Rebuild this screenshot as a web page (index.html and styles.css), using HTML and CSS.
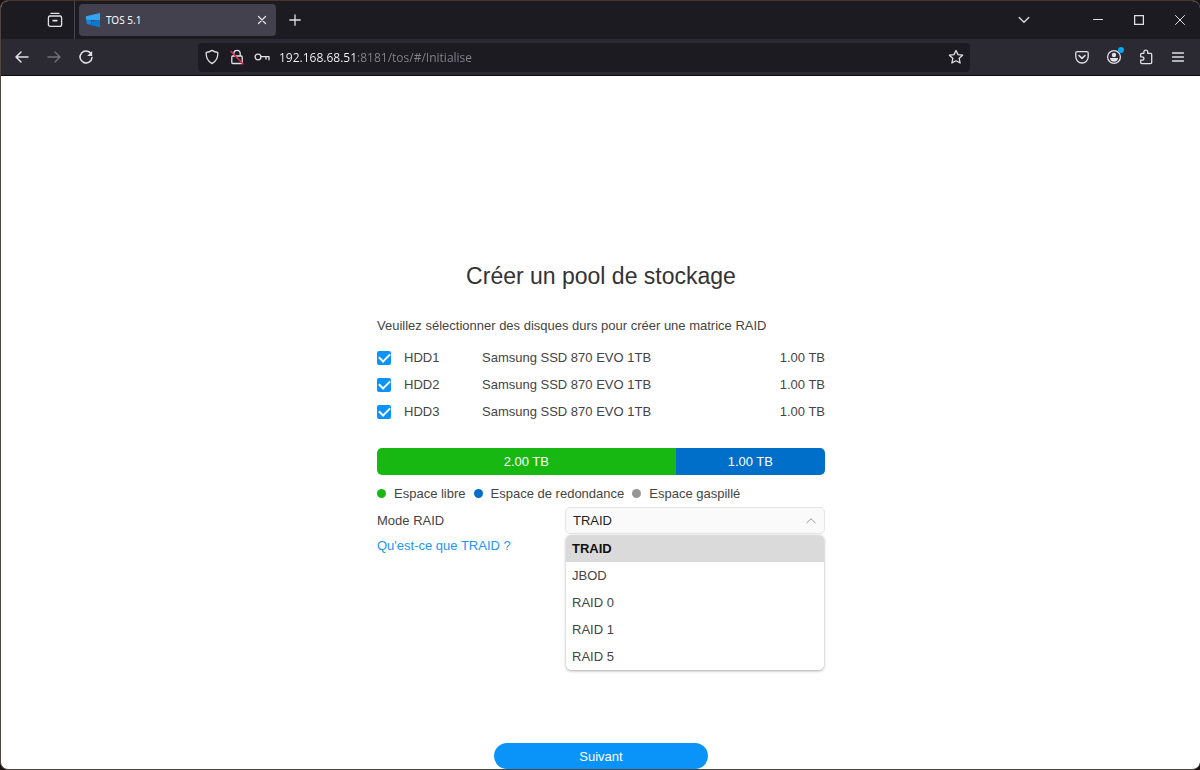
FILE: index.html
```html
<!DOCTYPE html>
<html lang="fr">
<head>
<meta charset="utf-8">
<title>TOS 5.1</title>
<link rel="stylesheet" href="styles.css">
</head>
<body>
<div class="window">
  <header class="tabbar">
    <button class="icon-btn recent" aria-label="Vue récente">
      <svg width="16" height="16" viewBox="0 0 16 16"><path d="M4 1.400h8M2.600 4h10.800q1.200.3 1.200 2v6.400q0 2-2 2H3.400q-2 0-2-2V6q0-1.700 1.200-2z"/><path d="M6.200 8.600h3.600" stroke-width="1.800"/></svg>
    </button>
    <div class="tab">
      <svg class="favicon" width="16" height="16" viewBox="0 0 16 16"><path d="M1 4.200 15 1v7.500L1 7.800z" fill="#33a6f2"/><path d="M1 7.800l5 .4v4.800L2 12z" fill="#1286dc"/><path d="M6.500 9.200l8.500-.7V15.200L6.500 13.500z" fill="#0b78d0"/></svg>
      <span class="tab-title">TOS 5.1</span>
      <button class="icon-btn tab-close" aria-label="Fermer l’onglet">
        <svg width="10" height="10" viewBox="0 0 10 10"><path d="M1.500 1.500l7 7m0-7l-7 7"/></svg>
      </button>
    </div>
    <button class="icon-btn new-tab" aria-label="Nouvel onglet">
      <svg width="12" height="12" viewBox="0 0 12 12"><path d="M6 .8v10.400M.8 6h10.400"/></svg>
    </button>
    <div class="window-controls">
      <button class="icon-btn tab-list" aria-label="Lister les onglets"><svg width="12" height="12" viewBox="0 0 12 12"><path d="M1.200 3.500 6 8.200l4.800-4.700"/></svg></button>
      <button class="icon-btn" aria-label="Réduire"><svg width="10" height="10" viewBox="0 0 10 10"><path d="M.5 4.500h9" stroke-width="1"/></svg></button>
      <button class="icon-btn" aria-label="Agrandir"><svg width="10" height="10" viewBox="0 0 10 10"><path d="M.6.6h8.800v8.800H.6z"/></svg></button>
      <button class="icon-btn" aria-label="Fermer"><svg width="10" height="10" viewBox="0 0 10 10"><path d="M.5.5l9 9m0-9l-9 9" stroke-width="1"/></svg></button>
    </div>
  </header>

  <nav class="toolbar">
    <div class="nav-buttons">
      <button class="icon-btn" aria-label="Page précédente"><svg width="16" height="16" viewBox="0 0 16 16"><path d="M14 8H2m5-5L2 8l5 5" stroke-width="1.500"/></svg></button>
      <button class="icon-btn" aria-label="Page suivante" disabled><svg width="16" height="16" viewBox="0 0 16 16"><path d="M2 8h12M9 3l5 5-5 5"/></svg></button>
      <button class="icon-btn" aria-label="Actualiser"><svg width="16" height="16" viewBox="0 0 16 16"><path d="M13 4.600A6 6 0 1 0 14 8.600" stroke-width="1.500"/><path d="M14.200 2v5H9.200z" fill="currentColor" stroke="none"/></svg></button>
    </div>
    <div class="urlbar">
      <button class="icon-btn" aria-label="Protection"><svg width="16" height="16" viewBox="0 0 16 16"><path d="M8 1.400c2 1.300 3.600 1.800 5.800 1.900.3 5-1.300 9-5.800 11.300C3.500 12.300 1.900 8.300 2.200 3.300 4.400 3.200 6 2.700 8 1.400z"/></svg></button>
      <button class="icon-btn" aria-label="Connexion non sécurisée"><svg width="16" height="16" viewBox="0 0 16 16"><path d="M4.800 7V4.500a3.200 3.200 0 0 1 6.400 0V7M3.800 7h8.400q1 0 1 1v5.500q0 1-1 1H3.800q-1 0-1-1V8q0-1 1-1z"/><path d="M2 2.500l12 12.500" stroke="#e22850" stroke-width="1.500"/></svg></button>
      <button class="icon-btn" aria-label="Mot de passe enregistré"><svg width="16" height="16" viewBox="0 0 16 16"><circle cx="4" cy="8" r="2.900"/><path d="M7 7.600h8v3.200M12 7.600v2.400"/></svg></button>
      <input class="url" type="text" aria-label="Adresse" value="192.168.68.51:8181/tos/#/Initialise">
      <button class="icon-btn" aria-label="Marquer cette page"><svg width="16" height="16" viewBox="0 0 16 16"><path d="M8 1.500l2 4.100 4.600.6-3.400 3.100.9 4.700L8 11.800 3.900 14l.9-4.700L1.400 6.200 6 5.600z"/></svg></button>
    </div>
    <div class="actions">
      <button class="icon-btn" aria-label="Pocket"><svg width="16" height="16" viewBox="0 0 16 16"><path d="M3.300 2.600h9.400q1.500 0 1.500 1.500v3.700a6.200 6.200 0 0 1-12.400 0V4.100q0-1.500 1.500-1.500z"/><path d="M5 6.500l3 2.900 3-2.900" stroke-width="1.500"/></svg></button>
      <button class="icon-btn account" aria-label="Compte"><svg width="16" height="16" viewBox="0 0 16 16"><circle cx="8" cy="8" r="6.400"/><circle cx="8" cy="6" r="2.200" fill="currentColor" stroke="none"/><path d="M4 9h8c0 2.400-1.700 3.800-4 3.800S4 11.400 4 9z" fill="currentColor" stroke="none"/></svg><span class="account-dot"></span></button>
      <button class="icon-btn" aria-label="Extensions"><svg width="16" height="16" viewBox="0 0 16 16"><path d="M2.700 5.300q0-1 1-1h2.200V3.100a1.900 1.900 0 0 1 3.800 0v1.200h3q1 0 1 1v8.300q0 1-1 1h-9q-1 0-1-1v-2.400h1.500a1.700 1.700 0 0 0 0-3.400H2.700z"/></svg></button>
      <button class="icon-btn" aria-label="Menu"><svg width="16" height="16" viewBox="0 0 16 16"><path d="M2.500 4h11M2.500 8h11M2.500 12h11"/></svg></button>
    </div>
  </nav>

  <main class="page">
    <form class="wizard">
      <h1 class="title">Créer un pool de stockage</h1>
      <p class="hint">Veuillez sélectionner des disques durs pour créer une matrice RAID</p>
      <div class="disks">
        <div class="disk"><input class="check" type="checkbox" id="hdd1" checked><label for="hdd1">HDD1</label><span>Samsung SSD 870 EVO 1TB</span><span class="size">1.00 TB</span></div>
        <div class="disk"><input class="check" type="checkbox" id="hdd2" checked><label for="hdd2">HDD2</label><span>Samsung SSD 870 EVO 1TB</span><span class="size">1.00 TB</span></div>
        <div class="disk"><input class="check" type="checkbox" id="hdd3" checked><label for="hdd3">HDD3</label><span>Samsung SSD 870 EVO 1TB</span><span class="size">1.00 TB</span></div>
      </div>
      <div class="capacity">
        <div class="capacity-free">2.00 TB</div>
        <div class="capacity-redundant">1.00 TB</div>
      </div>
      <ul class="legend">
        <li class="legend-item free">Espace libre</li>
        <li class="legend-item redundant">Espace de redondance</li>
        <li class="legend-item wasted">Espace gaspillé</li>
      </ul>
      <div class="mode">
        <label for="raid">Mode RAID</label>
        <div class="dropdown">
          <select class="mode-select" id="raid"><option>TRAID</option><option>JBOD</option><option>RAID 0</option><option>RAID 1</option><option>RAID 5</option></select>
          <svg class="caret" width="12" height="12" viewBox="0 0 12 12"><path d="M1.500 8 6 3.800 10.500 8"/></svg>
          <ul class="menu" role="listbox" aria-label="Mode RAID">
            <li class="option selected" role="option" aria-selected="true">TRAID</li>
            <li class="option" role="option">JBOD</li>
            <li class="option" role="option">RAID 0</li>
            <li class="option" role="option">RAID 1</li>
            <li class="option" role="option">RAID 5</li>
          </ul>
        </div>
      </div>
      <a class="help" href="#traid">Qu'est-ce que TRAID ?</a>
      <button class="next" type="button">Suivant</button>
    </form>
  </main>
</div>
</body>
</html>
```
FILE: styles.css
```css
* { box-sizing: border-box; }
html { background: #1c1110; }
body {
  margin: 0;
  font-family: "Liberation Sans", Arial, sans-serif;
  font-size: 13px;
  color: #444;
}
button, input, select { font: inherit; color: inherit; }
h1, p, ul { margin: 0; padding: 0; }
ul { list-style: none; }

.window {
  min-height: 100vh;
  display: flex;
  flex-direction: column;
  border: 1px solid #4d4542;
  border-top-color: #49342a;
  border-right: 0;
  border-radius: 8px;
  background: #fff;
  overflow: hidden;
}

/* Browser chrome */
.icon-btn {
  display: inline-flex;
  align-items: center;
  justify-content: center;
  flex: none;
  padding: 0;
  border: 0;
  background: none;
  color: #e0e0e6;
}
.icon-btn svg {
  fill: none;
  stroke: currentColor;
  stroke-width: 1.3;
  stroke-linecap: round;
  stroke-linejoin: round;
}
.icon-btn:disabled { color: #73727a; }

.tabbar {
  display: flex;
  align-items: center;
  height: 38px;
  background: #1c1b22;
}
.recent {
  align-self: stretch;
  width: 74px;
  padding-left: 34px;
  border-right: 1px solid #47464e;
}
.tab {
  display: flex;
  align-items: center;
  gap: 5px;
  width: 197px;
  height: 32px;
  margin-left: 4px;
  padding: 0 9px 0 6px;
  border-radius: 4px;
  background: #42414d;
  color: #fbfbfe;
  font-family: "Noto Sans", sans-serif;
  font-size: 10px;
}
.tab-title { flex: 1; }
.new-tab { width: 38px; height: 32px; }
.window-controls { display: flex; margin-left: auto; }
.window-controls .icon-btn { width: 41px; height: 32px; }
.window-controls .tab-list { margin-right: 33px; }

.toolbar {
  display: flex;
  align-items: center;
  height: 37px;
  border-bottom: 1px solid #0c0c0d;
  background: #2b2a33;
}
.nav-buttons { display: flex; gap: 16px; width: 197px; padding-left: 13px; }
.urlbar {
  display: flex;
  align-items: center;
  gap: 9px;
  flex: 1;
  height: 29px;
  padding: 0 6px;
  border-radius: 4px;
  background: #1c1b22;
}
.url {
  flex: 1;
  min-width: 0;
  padding: 0;
  border: 0;
  outline: 0;
  font-family: "Open Sans", sans-serif;
  font-size: 12px;
  background: linear-gradient(90deg, #fbfbfe 79px, #85848c 79px);
  -webkit-background-clip: text;
  background-clip: text;
  -webkit-text-fill-color: transparent;
}
.actions { display: flex; gap: 16px; margin-left: 104px; padding-right: 14px; }
.account { position: relative; }
.account-dot {
  position: absolute;
  top: -2px;
  right: -2px;
  width: 6px;
  height: 6px;
  border-radius: 50%;
  background: #00a8f8;
}

/* Storage pool wizard */
.page { flex: 1; padding: 184px 0 0 1px; }
.wizard {
  display: flex;
  flex-direction: column;
  max-width: 448px;
  margin: 0 auto;
}
.title {
  font-size: 23px;
  font-weight: 400;
  line-height: 32px;
  text-align: center;
  color: #333;
}
.hint { margin-top: 20px; line-height: 27px; }
.disks { margin-top: 5px; }
.disk {
  display: grid;
  grid-template-columns: 27px 78px 1fr auto;
  align-items: center;
  height: 27px;
}
.check {
  appearance: none;
  width: 14px;
  height: 14px;
  margin: 0;
  border-radius: 2px;
  background: #0a94fa;
  display: grid;
  place-items: center;
}
.check:checked::before {
  content: "";
  width: 9px;
  height: 5px;
  margin-bottom: 3px;
  border: solid #fff;
  border-width: 0 0 2px 2px;
  transform: rotate(-45deg);
}
.capacity {
  display: grid;
  grid-template-columns: 2fr 1fr;
  margin-top: 23px;
  border-radius: 5px;
  overflow: hidden;
  line-height: 27px;
  text-align: center;
  color: #fff;
}
.capacity-free { background: #18b812; }
.capacity-redundant { background: #006fc9; }
.legend { display: flex; gap: 8px; margin-top: 5px; line-height: 27px; }
.legend-item { display: flex; align-items: center; gap: 8px; }
.legend-item::before { content: ""; width: 9px; height: 9px; border-radius: 50%; }
.free::before { background: #18b812; }
.redundant::before { background: #006fc9; }
.wasted::before { background: #969696; }
.mode { display: grid; grid-template-columns: 188px 1fr; align-items: center; }
.dropdown { position: relative; }
.mode-select {
  display: block;
  appearance: none;
  width: 100%;
  height: 27px;
  padding: 0 7px;
  border: 1px solid #e4e4e4;
  border-radius: 5px;
  background: #fafafa;
  color: #222;
}
.caret {
  position: absolute;
  top: 8px;
  right: 8px;
  fill: none;
  stroke: #999;
  pointer-events: none;
}
.menu {
  position: absolute;
  top: 100%;
  left: 0;
  right: 0;
  margin: 1px 1px 0;
  border-radius: 5px;
  background: #fff;
  box-shadow: 0 1px 3px rgba(0, 0, 0, 0.35);
  overflow: hidden;
}
.option { padding: 0 6px; line-height: 27px; }
.selected { background: #dadada; color: #111; font-weight: 700; }
.help {
  align-self: flex-start;
  line-height: 24px;
  color: #2196f3;
  text-decoration: none;
}
.next {
  align-self: center;
  width: 214px;
  height: 26px;
  margin-top: 185px;
  border: 0;
  border-radius: 13px;
  background: #0a94fa;
  color: #fff;
}
```
